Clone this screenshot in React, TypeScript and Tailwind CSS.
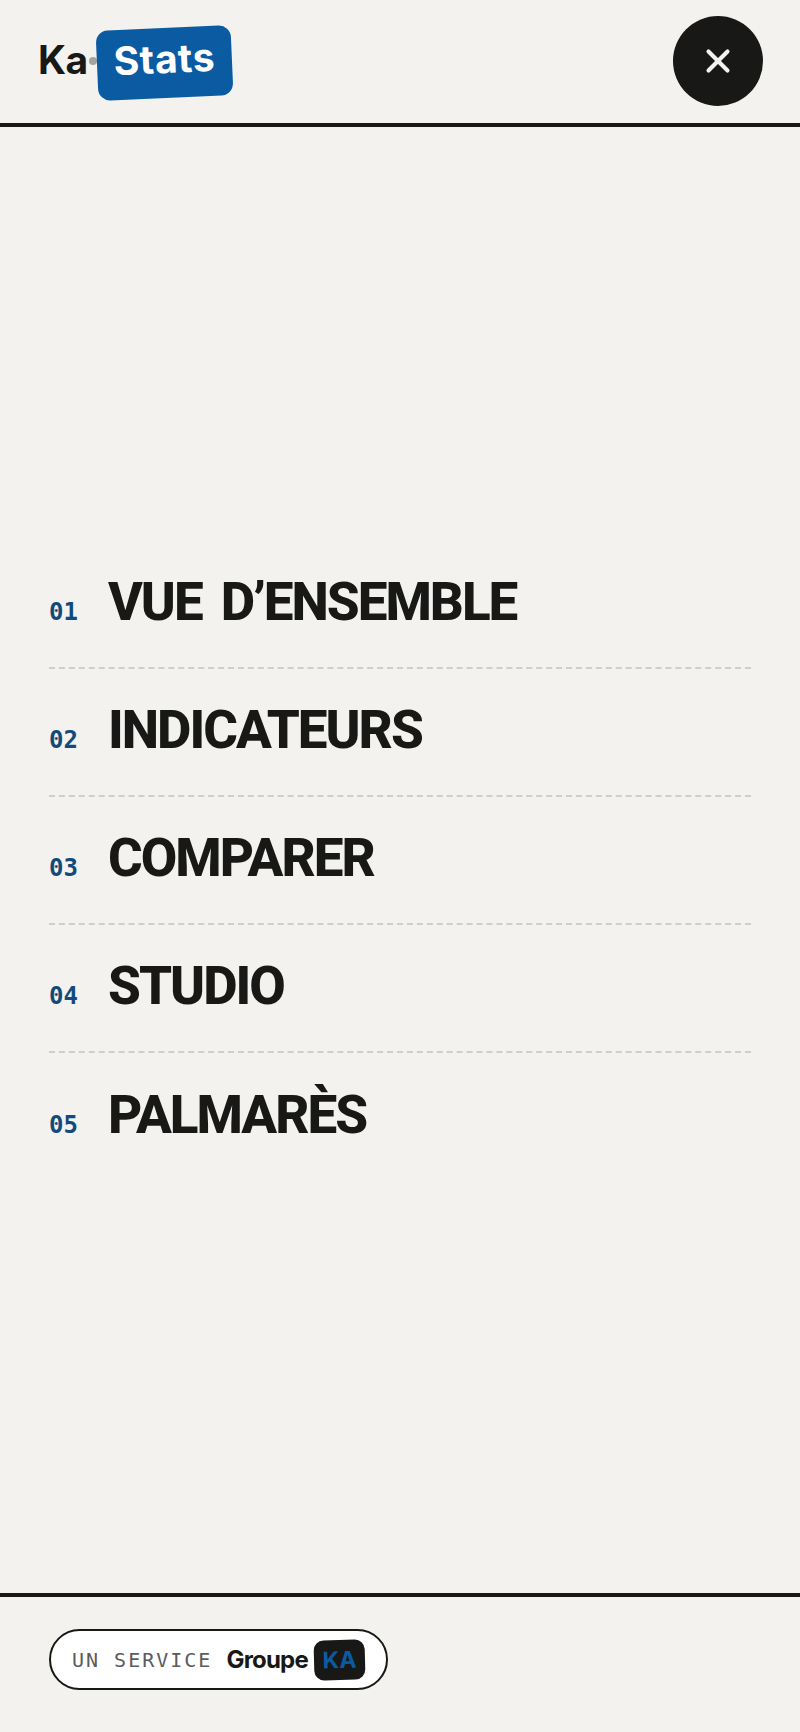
import { X } from "lucide-react";

const items = ["VUE D’ENSEMBLE", "INDICATEURS", "COMPARER", "STUDIO", "PALMARÈS"];
const sans = "font-['Inter',sans-serif]";
const mono = "font-['DejaVu_Sans_Mono',monospace]";

export default function App() {
  return (
    <div className={`flex h-[1732px] w-[800px] flex-col overflow-hidden bg-[#f3f2ef] text-[#181816] ${sans}`}>
      <header className="flex h-[127px] shrink-0 items-center justify-between border-b-4 border-[#181816] pb-[2px] pl-[38px] pr-[37px]">
        <div className="flex items-center">
          <span className="-translate-y-[1px] text-[39px] font-bold leading-none tracking-[-0.5px]">Ka</span>
          <span className="ml-[1px] h-[8px] w-[8px] rounded-full bg-[#a3a3a0]" />
          <span className="ml-[0px] flex h-[70px] w-[135px] translate-y-[2px] -rotate-[2.5deg] items-center justify-center rounded-[12px] bg-[#0b5ba3] pb-[9px] text-[39px] font-bold leading-none tracking-[0.6px] text-white">
            Stats
          </span>
        </div>
        <button className="flex h-[90px] w-[90px] items-center justify-center rounded-full bg-[#181816] text-[#f3f2ef]">
          <X size={38} strokeWidth={2.6} />
        </button>
      </header>

      <main className="flex flex-1 flex-col justify-center px-[49px] pt-[1px]">
        {items.map((item, i) => (
          <div
            key={item}
            className={`flex h-[128px] items-center gap-[29px] ${i < items.length - 1 ? "border-b-2 border-dashed border-[#cfcec9]" : ""}`}
          >
            <span className={`w-[30px] translate-y-[8px] text-[24px] font-bold leading-none text-[#124a7c] ${mono}`}>
              {String(i + 1).padStart(2, "0")}
            </span>
            <span className="-translate-y-[1px] font-['Roboto',sans-serif] text-[53px] font-extrabold leading-none tracking-[-2px] [word-spacing:8px]">
              {item}
            </span>
          </div>
        ))}
      </main>

      <footer className="flex h-[139px] shrink-0 items-center border-t-4 border-[#181816] px-[49px] pb-[10px]">
        <div className="flex h-[61px] w-[339px] items-center rounded-full border-2 border-[#181816] bg-white pl-[21px]">
          <span className={`text-[20px] leading-none tracking-[2px] text-[#5c5c5c] ${mono}`}>UN SERVICE</span>
          <span className="ml-[14px] text-[24px] font-bold leading-none tracking-[-0.8px]">Groupe</span>
          <span className="ml-[6px] flex h-[40px] w-[51px] rotate-[-1.5deg] items-center justify-center rounded-[10px] bg-[#181816] text-[23px] font-bold leading-none text-[#0b5ba3]">
            KA
          </span>
        </div>
      </footer>
    </div>
  );
}
